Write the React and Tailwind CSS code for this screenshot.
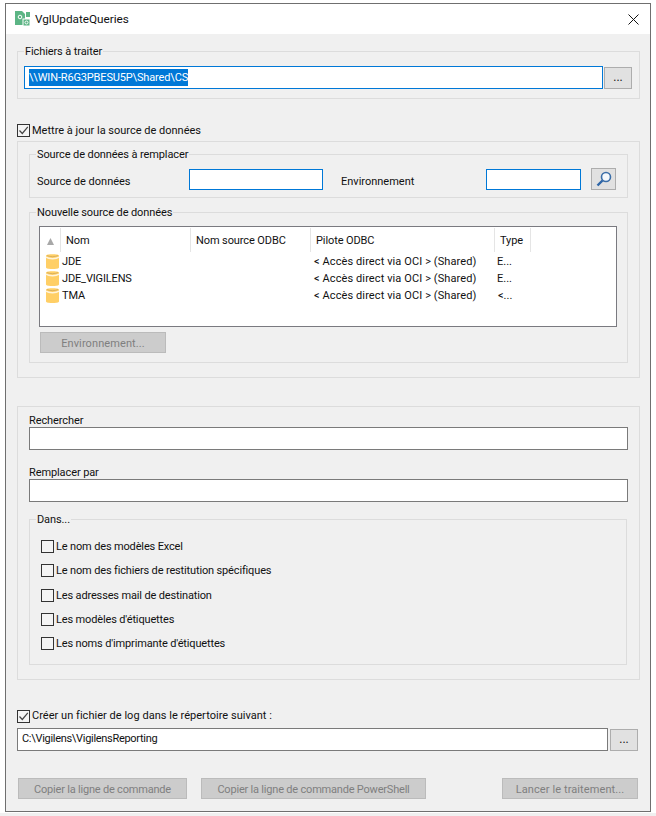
const FONT = "font-['Roboto','Open_Sans',sans-serif]";

function Check({ checked }) {
  return (
    <span className="flex items-center justify-center w-[13px] h-[13px] border border-[#333333] bg-[#f4f4f4] shrink-0">
      {checked && (
        <svg width="11" height="11" viewBox="0 0 11 11" fill="none">
          <path d="M1.5 5.5 L4.3 8.5 L9.8 1.8" stroke="#444444" strokeWidth="1.2" />
        </svg>
      )}
    </span>
  );
}

function Group({ legend, className, children }) {
  return (
    <fieldset className={"border border-[#dcdcdc] min-w-0 " + className}>
      {legend && (
        <legend className="ml-[6px] px-[1px] text-[11px] leading-[14px] text-[#111111] tracking-[-0.1px]">
          <span className="relative top-[1px]">{legend}</span>
        </legend>
      )}
      {children}
    </fieldset>
  );
}

function Btn({ className, children }) {
  return (
    <div className={"flex items-center justify-center whitespace-nowrap bg-[#cccccc] border border-[#bbbbbb] text-[11px] text-[#7f7f7f] pt-[3px] " + className}>
      {children}
    </div>
  );
}

function Dots({ className }) {
  return (
    <div className={"flex items-center justify-center bg-[#e1e1e1] border border-[#adadad] text-[12px] text-[#111111] pb-[2px] " + className}>...</div>
  );
}

function Cyl() {
  return (
    <svg width="15" height="17" viewBox="0 0 15 17" className="shrink-0">
      <path d="M1 2.5 C1 0.8 14 0.8 14 2.5 V14.5 C14 16.5 1 16.5 1 14.5 Z" fill="#ffcf66" />
      <path d="M1 4.2 C4 6.2 11 6.2 14 4.2" stroke="#fff4dc" strokeWidth="1.4" fill="none" />
      <path d="M2 2.6 C5 4 10 4 13 2.6" stroke="#c9a45c" strokeWidth="0.7" fill="none" />
    </svg>
  );
}

function Row({ name, type, tx = "" }) {
  return (
    <div className="flex items-center h-[17px] text-[11px] text-[#111111]">
      <div className="w-[21px] pl-[5px] shrink-0"><Cyl /></div>
      <div className="w-[131px] pl-[1px] pt-[2px] shrink-0 tracking-[-0.15px]">{name}</div>
      <div className="w-[120px] shrink-0" />
      <div className="w-[184px] pl-[2px] pt-[2px] shrink-0 whitespace-nowrap tracking-[0.1px]">{"< Accès direct via OCI > (Shared)"}</div>
      <div className={"pl-[1px] pt-[2px] " + tx}>{type}</div>
    </div>
  );
}

function Col({ w, children, pl = "pl-[5px]" }) {
  return (
    <div className={"h-[24px] flex items-center border-r border-[#e5e5e5] shrink-0 text-[11px] text-[#111111] tracking-[-0.1px] pt-[2px] " + w + " " + pl}>{children}</div>
  );
}

function Opt({ children, className = "" }) {
  return (
    <div className={"flex items-center gap-[2px] h-[14px] text-[11px] text-[#111111] tracking-[-0.15px] " + className}>
      <Check />
      <span className="pt-[2px]">{children}</span>
    </div>
  );
}

export default function App() {
  return (
    <div className={"w-[656px] h-[816px] bg-white overflow-hidden pt-[3px] pl-[5px] " + FONT}>
      <div className="w-[646px] h-[809px] border border-[#6f6f6f] bg-[#f0f0f0] flex flex-col">
        <div className="h-[30px] bg-white flex items-center pl-[9px] pr-[11px] shrink-0">
          <svg width="16" height="16" viewBox="0 0 16 16" className="shrink-0">
            <path d="M0 0 H7 L10 3 V14 H0 Z" fill="#5cb585" />
            <rect x="11" y="1" width="4" height="5" fill="#5cb585" />
            <rect x="8" y="8" width="7" height="7" fill="#5cb585" stroke="#ffffff" strokeWidth="1" />
            <circle cx="5" cy="6" r="1.8" fill="none" stroke="#ffffff" strokeWidth="1" />
            <circle cx="11.5" cy="11.5" r="1.5" fill="none" stroke="#ffffff" strokeWidth="1" />
          </svg>
          <span className="ml-[4px] pt-[1px] text-[11.75px] text-[#111111]">VglUpdateQueries</span>
          <svg width="11" height="11" viewBox="0 0 11 11" className="ml-auto">
            <path d="M0.5 0.5 L10.5 10.5 M10.5 0.5 L0.5 10.5" stroke="#111111" strokeWidth="1" />
          </svg>
        </div>

        <div className="pl-[11px] w-[634px] flex flex-col">
          <Group legend="Fichiers à traiter" className="mt-[10px] h-[55px]">
            <div className="flex gap-[1px] mt-[8px] px-[6px]">
              <div className="w-[579px] h-[23px] border border-[#0078d7] bg-white flex items-center pl-[4px]">
                <span className="bg-[#0078d7] text-white text-[11px] leading-[17px] tracking-[-0.15px]">\\WIN-R6G3PBESU5P\Shared\CS</span>
              </div>
              <Dots className="w-[28px] h-[22px] mt-[1px]" />
            </div>
          </Group>

          <div className="flex items-center gap-[2px] mt-[24px] h-[14px] text-[11px] text-[#111111]">
            <Check checked />
            <span className="pt-[2px]">Mettre à jour la source de données</span>
          </div>

          <Group className="mt-[4px] h-[237px] px-[11px] pt-[5px]">
            <Group legend="Source de données à remplacer" className="h-[51px]">
              <div className="flex items-center mt-[8px] pl-[7px] text-[11px] text-[#111111]">
                <span className="w-[152px] shrink-0 pt-[5px]">Source de données</span>
                <div className="w-[134px] h-[21px] border border-[#0078d7] bg-white shrink-0" />
                <span className="ml-[18px] w-[145px] shrink-0 pt-[5px]">Environnement</span>
                <div className="w-[95px] h-[21px] border border-[#0078d7] bg-white shrink-0" />
                <div className="ml-[10px] w-[25px] h-[22px] -mt-[2px] bg-[#e1e1e1] border border-[#adadad] flex items-center justify-center">
                  <svg width="18" height="18" viewBox="0 0 18 18" fill="none">
                    <circle cx="11" cy="7" r="4.5" stroke="#3b6ea8" strokeWidth="1.6" fill="#f4f8fc" />
                    <path d="M7.5 10.5 L2.5 15.5" stroke="#2f66a8" strokeWidth="2.4" />
                  </svg>
                </div>
              </div>
            </Group>

            <Group legend="Nouvelle source de données" className="mt-[7px] h-[158px]">
              <div className="pl-[9px] pr-[10px]">
                <div className="mt-[7px] h-[101px] border border-[#7a7a80] bg-white pt-[1px]">
                  <div className="flex">
                    <Col w="w-[21px]" pl="pl-[7px]">
                      <svg width="7" height="7" viewBox="0 0 7 7"><path d="M3.5 0 L7 7 H0 Z" fill="#a8a8a8" /></svg>
                    </Col>
                    <Col w="w-[130px]">Nom</Col>
                    <Col w="w-[120px]">Nom source ODBC</Col>
                    <Col w="w-[184px]">Pilote ODBC</Col>
                    <Col w="w-[36px]">Type</Col>
                  </div>
                  <div className="mt-[1px]">
                    <Row name="JDE" type="E..." />
                    <Row name="JDE_VIGILENS" type="E..." />
                    <Row name="TMA" type="<..." tx="pl-[2px]" />
                  </div>
                </div>
                <Btn className="w-[126px] h-[21px] mt-[5px] ml-[1px] tracking-[0.1px]">Environnement...</Btn>
              </div>
            </Group>
          </Group>

          <Group className="mt-[28px] h-[274px] px-[11px]">
            <div className="h-[14px] mt-[6px] pt-[2px] flex items-center text-[11px] text-[#111111] tracking-[-0.1px]">Rechercher</div>
            <div className="h-[23px] w-[599px] border border-[#7a7a7a] bg-white" />
            <div className="h-[14px] mt-[15px] pt-[2px] flex items-center text-[11px] text-[#111111] tracking-[-0.1px]">Remplacer par</div>
            <div className="h-[23px] w-[599px] border border-[#7a7a7a] bg-white" />
            <Group legend="Dans..." className="mt-[10px] h-[153px] w-[598px]">
              <div className="flex flex-col gap-[10px] mt-[13px] pl-[11px]">
                <Opt>Le nom des modèles Excel</Opt>
                <Opt>Le nom des fichiers de restitution spécifiques</Opt>
                <Opt className="mt-[1px]">Les adresses mail de destination</Opt>
                <Opt>Les modèles d'étiquettes</Opt>
                <Opt>Les noms d'imprimante d'étiquettes</Opt>
              </div>
            </Group>
          </Group>

          <div className="flex items-center gap-[2px] mt-[29px] h-[14px] text-[11px] text-[#111111]">
            <Check checked />
            <span className="tracking-[0.03px]">Créer un fichier de log dans le répertoire suivant :</span>
          </div>
          <div className="flex mt-[5px] gap-[2px]">
            <div className="w-[591px] h-[23px] border border-[#7a7a7a] bg-white flex items-center pl-[4px] pb-[1px] text-[11px] text-[#111111] tracking-[-0.3px]">C:\Vigilens\VigilensReporting</div>
            <Dots className="w-[28px] h-[22px] mt-[1px]" />
          </div>
          <div className="flex mt-[27px] pl-[1px]">
            <Btn className="w-[169px] h-[21px] tracking-[-0.2px]">Copier la ligne de commande</Btn>
            <Btn className="w-[225px] h-[21px] ml-[14px] tracking-[-0.2px]">Copier la ligne de commande PowerShell</Btn>
            <Btn className="w-[136px] h-[21px] ml-[76px] tracking-[0.1px]">Lancer le traitement...</Btn>
          </div>
        </div>
      </div>
      <div className="h-[3px] w-[656px] -ml-[5px] mt-[1px] bg-[#f0f0f0]" />
    </div>
  );
}
